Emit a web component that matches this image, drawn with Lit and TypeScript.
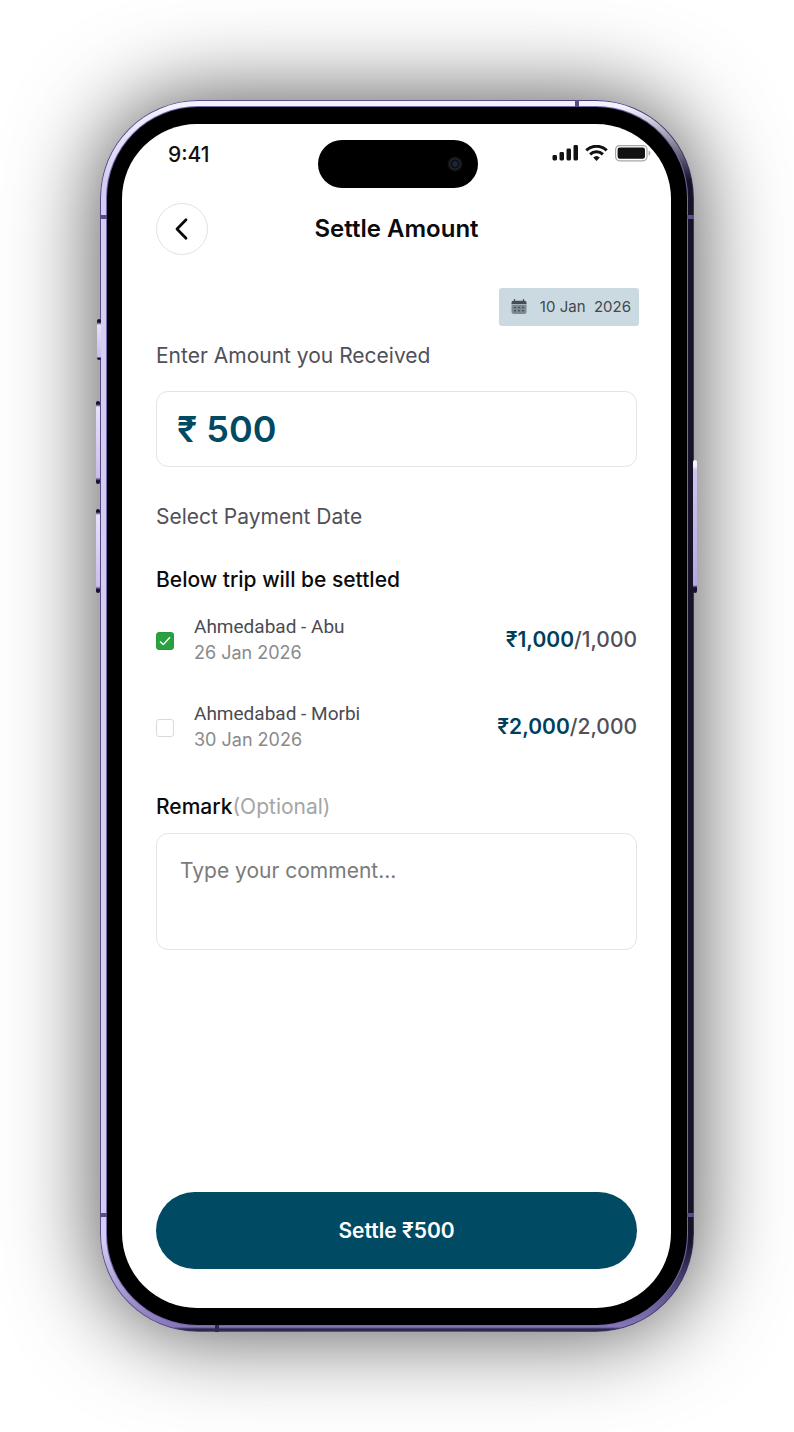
import { LitElement, html, css, svg } from "lit";
import { customElement, state } from "lit/decorators.js";

interface Trip {
  id: string;
  route: string;
  date: string;
  paid: string;
  total: string;
  selected: boolean;
}

@customElement("status-bar")
class StatusBar extends LitElement {
  static styles = css`
    :host {
      display: block;
    }
    .row {
      display: flex;
      justify-content: space-between;
      align-items: center;
      padding: 19px 20px 0 46px;
      color: #111;
      font: 500 21px/24px Inter, "Liberation Sans", sans-serif;
    }
    .indicators {
      display: flex;
      align-items: center;
      gap: 7px;
    }
    svg {
      display: block;
    }
  `;

  render() {
    return html`
      <div class="row">
        <span>9:41</span>
        <span class="indicators">
          <svg width="26" height="20" viewBox="0 0 26 20" fill="#111">
            <rect x="0.5" y="10" width="4.5" height="5.5" rx="1.4" />
            <rect x="7.5" y="7" width="4.5" height="8.5" rx="1.4" />
            <rect x="14.5" y="3.5" width="4.5" height="12" rx="1.4" />
            <rect x="21.5" y="0" width="4.5" height="15.5" rx="1.4" />
          </svg>
          <svg width="23" height="20" viewBox="0 0 23 20" fill="none" stroke="#111" stroke-width="3">
            <path d="M1.3 5.4a14.6 14.6 0 0 1 20.4 0" />
            <path d="M5.1 9.4a9.2 9.2 0 0 1 12.8 0" />
            <path d="M11.5 15.9l-3.3-3.3a4.8 4.8 0 0 1 6.6 0z" fill="#111" stroke="none" />
          </svg>
          <svg width="36" height="20" viewBox="0 0 36 20">
            <rect x="0.6" y="0.6" width="31.4" height="15.2" rx="4" fill="none" stroke="#a6a6a6" stroke-width="1.2" />
            <rect x="2.6" y="2.6" width="27.4" height="11.2" rx="2.2" fill="#111" />
            <path d="M33.6 5.6c2.3 1 2.3 4.2 0 5.2z" fill="#a6a6a6" />
          </svg>
        </span>
      </div>
    `;
  }
}

@customElement("trip-row")
class TripRow extends LitElement {
  static properties = { trip: { attribute: false } };
  declare trip: Trip;

  static styles = css`
    label {
      display: flex;
      align-items: center;
      gap: 20px;
    }
    .tick {
      appearance: none;
      flex: none;
      width: 18px;
      height: 18px;
      margin: 2px 0 0;
      border: 1px solid #d9d9d9;
      border-radius: 3px;
      background: #fff;
    }
    .tick:checked {
      border-color: #259b39;
      background: #2ba041
        url("data:image/svg+xml,%3Csvg xmlns='http://www.w3.org/2000/svg' viewBox='0 0 16 16'%3E%3Cpath d='M3 8.4l3.3 3.2L13 4.2' fill='none' stroke='white' stroke-width='1.4'/%3E%3C/svg%3E")
        center / 16px no-repeat;
    }
    .where {
      flex: 1;
      display: grid;
      font: 400 18px/26px Inter, "Liberation Sans", sans-serif;
    }
    .route {
      font: 400 19px/26px Roboto, "Liberation Sans", sans-serif;
      color: #4b4b52;
    }
    .date {
      color: #8a8a8a;
    }
    .amount {
      font: 500 21px/26px Inter, "Liberation Sans", sans-serif;
      color: #505058;
    }
    .paid {
      font-weight: 600;
      color: #003f5c;
    }
  `;

  render() {
    const t = this.trip;
    return html`
      <label>
        <input class="tick" type="checkbox" .checked=${t.selected} />
        <span class="where"><span class="route">${t.route}</span><span class="date">${t.date}</span></span>
        <span class="amount"><span class="paid">₹${t.paid}</span>/${t.total}</span>
      </label>
    `;
  }
}

@customElement("app-root")
class AppRoot extends LitElement {
  @state() trips: Trip[] = [
    { id: "abu", route: "Ahmedabad - Abu", date: "26 Jan 2026", paid: "1,000", total: "1,000", selected: true },
    { id: "morbi", route: "Ahmedabad - Morbi", date: "30 Jan 2026", paid: "2,000", total: "2,000", selected: false },
  ];

  static styles = css`
    :host {
      display: block;
      background: #fff;
      font-family: Inter, "Liberation Sans", sans-serif;
      color: #0b0b0d;
    }
    * {
      box-sizing: border-box;
    }
    .stage {
      display: flex;
      min-height: 100vh;
      padding: 100px;
      overflow: hidden;
    }
    .phone {
      position: relative;
      flex: 1;
      display: flex;
      padding: 1px;
      border-radius: 98px;
      background: linear-gradient(90deg, #574a85, #5f5290 60%, #3b3168);
      box-shadow: 0 0 92px rgba(0, 0, 0, 0.7);
    }
    .rail {
      flex: 1;
      display: flex;
      padding: 6px;
      border-radius: 97px;
      background:
        linear-gradient(#f4f0fd 0 6px, transparent 80px),
        linear-gradient(0deg, #2f2752 0 2px, #8576b8 4px, transparent 90px),
        linear-gradient(90deg, #d6cdf2 0 20%, #a598cf 60%, #17122a 99%);
    }
    .bezel {
      flex: 1;
      display: flex;
      padding: 17px 16px 17px 15px;
      border-radius: 91px;
      background: #000;
      box-shadow: 0 0 0 1px #7768ad;
    }
    .screen {
      flex: 1;
      display: flex;
      flex-direction: column;
      border-radius: 75px;
      background: #fff;
      overflow: hidden;
    }
    .key {
      position: absolute;
      width: 4px;
      border-radius: 2px;
      background: linear-gradient(#171030 0 3px, #e8e1fb 6px, #c9bdec 92%, #171030 96%);
    }
    .silent { left: -3px; top: 219px; height: 41px; }
    .vol-up { left: -4px; top: 301px; height: 83px; }
    .vol-down { left: -4px; top: 409px; height: 84px; }
    .power {
      right: -3px;
      top: 360px;
      height: 133px;
      background: linear-gradient(#f6f2ff 0 6px, #cfc4ee 10px, #b7a9e0 94%, #171030 96%);
    }
    .seam {
      position: absolute;
      background: #5a4d86;
    }
    .seam.side { width: 7px; height: 4px; }
    .seam.end { width: 4px; height: 7px; }
    .seam.left { left: 0; }
    .seam.right { right: 0; }
    .seam.high { top: 115px; }
    .seam.low { bottom: 115px; }
    .seam.top { top: 0; right: 115px; }
    .seam.bottom { bottom: 0; left: 115px; background: #2f2752; }
    .island {
      position: absolute;
      top: 40px;
      left: calc(50% - 79px);
      width: 160px;
      height: 48px;
      padding: 15px;
      border-radius: 24px;
      background: #000;
      display: flex;
      justify-content: flex-end;
      align-items: center;
    }
    .lens {
      width: 16px;
      height: 16px;
      border-radius: 50%;
      background: radial-gradient(circle, #1d2440 0 2px, #07070c 4px, #26262b 5px, #1a1a1e 6px, #000 8px);
    }
    .content {
      flex: 1;
      display: flex;
      flex-direction: column;
      padding: 36px 34px 39px;
    }
    .bar {
      display: grid;
      grid-template-columns: 52px 1fr 52px;
      align-items: center;
      text-align: center;
    }
    .back {
      display: grid;
      place-items: center;
      width: 52px;
      height: 52px;
      padding: 0;
      border: 1px solid #e2e2e2;
      border-radius: 50%;
      background: #fff;
    }
    h1 {
      margin: 0;
      font: 600 24px/30px Inter, "Liberation Sans", sans-serif;
    }
    .date-chip {
      align-self: flex-end;
      display: flex;
      align-items: center;
      gap: 13px;
      height: 38px;
      margin: 33px -2px 0 0;
      padding: 0 8px 0 12px;
      border: 0;
      border-radius: 3px;
      background: #cbdae0;
      color: #43474e;
      font: 400 15px/20px Inter, "Liberation Sans", sans-serif;
      white-space: pre;
    }
    .caption {
      font: 400 21px/26px Inter, "Liberation Sans", sans-serif;
      color: #505058;
      margin: 0;
    }
    .received {
      margin-top: 17px;
    }
    .amount {
      width: 100%;
      height: 76px;
      margin-top: 22px;
      padding: 0 20px;
      border: 1px solid #e4e4e4;
      border-radius: 12px;
      background: #fff;
      color: #004a63;
      font: 600 36px/44px Inter, "Liberation Sans", sans-serif;
    }
    .pay-date {
      margin-top: 37px;
    }
    h2,
    .remark {
      margin: 37px 0 0;
      font: 500 21px/26px Inter, "Liberation Sans", sans-serif;
    }
    .trips {
      display: grid;
      gap: 35px;
      margin-top: 21px;
    }
    .remark {
      margin-top: 41px;
    }
    .optional {
      font-weight: 400;
      color: #a5a5a5;
    }
    .comment {
      width: 100%;
      height: 117px;
      margin-top: 13px;
      padding: 24px 23px;
      border: 1px solid #e4e4e4;
      border-radius: 12px;
      resize: none;
      font: 400 21px/26px Inter, "Liberation Sans", sans-serif;
    }
    .comment::placeholder {
      color: #7b7b7b;
    }
    .settle {
      height: 77px;
      margin-top: auto;
      border: 0;
      border-radius: 39px;
      background: #004b63;
      color: #fff;
      font: 600 21px/26px Inter, "Liberation Sans", sans-serif;
    }
  `;

  render() {
    return html`
      <div class="stage">
        <main class="phone">
          <span class="key silent"></span>
          <span class="key vol-up"></span>
          <span class="key vol-down"></span>
          <span class="key power"></span>
          <div class="rail">
            <div class="bezel">
              <div class="screen">
                <status-bar></status-bar>
                <div class="content">
                  <header class="bar">
                    <button class="back" aria-label="Back">
                      <svg width="24" height="24" viewBox="0 0 24 24" fill="none" stroke="#0b0b0d" stroke-width="2.8" stroke-linecap="round" stroke-linejoin="round">
                        <path d="M16 2.8L7 12l9 9.2" />
                      </svg>
                    </button>
                    <h1>Settle Amount</h1>
                  </header>
                  <button class="date-chip"><svg width="16" height="16" viewBox="0 0 16 16">
                      <path d="M0.5 5.5h15V12.5a2.5 2.5 0 0 1-2.5 2.5H3a2.5 2.5 0 0 1-2.5-2.5z" fill="#7d8890" />
                      <path d="M0.5 5V3.5A1.8 1.8 0 0 1 2.3 1.7h11.4a1.8 1.8 0 0 1 1.8 1.8V5z" fill="#474d55" />
                      <path d="M3.5 0.5v2M12.5 0.5v2" stroke="#474d55" stroke-width="1.2" stroke-linecap="round" />
                      <g fill="#30363d">${[4, 8, 12].map((x) => [8.5, 11.8].map((y) => svg`<circle cx=${x} cy=${y} r="0.8" />`))}</g>
                    </svg><span>10 Jan  2026</span></button>
                  <label class="caption received" for="amount">Enter Amount you Received</label>
                  <input class="amount" id="amount" type="text" .value=${"₹ 500"} />
                  <p class="caption pay-date">Select Payment Date</p>
                  <h2>Below trip will be settled</h2>
                  <div class="trips">${this.trips.map((t) => html`<trip-row .trip=${t}></trip-row>`)}</div>
                  <label class="remark" for="comment">Remark<span class="optional">(Optional)</span></label>
                  <textarea class="comment" id="comment" placeholder="Type your comment..."></textarea>
                  <button class="settle">Settle ₹500</button>
                </div>
              </div>
            </div>
          </div>
          <span class="seam side left high"></span>
          <span class="seam side right high"></span>
          <span class="seam side left low"></span>
          <span class="seam side right low"></span>
          <span class="seam end top"></span>
          <span class="seam end bottom"></span>
          <div class="island"><span class="lens"></span></div>
        </main>
      </div>
    `;
  }
}
